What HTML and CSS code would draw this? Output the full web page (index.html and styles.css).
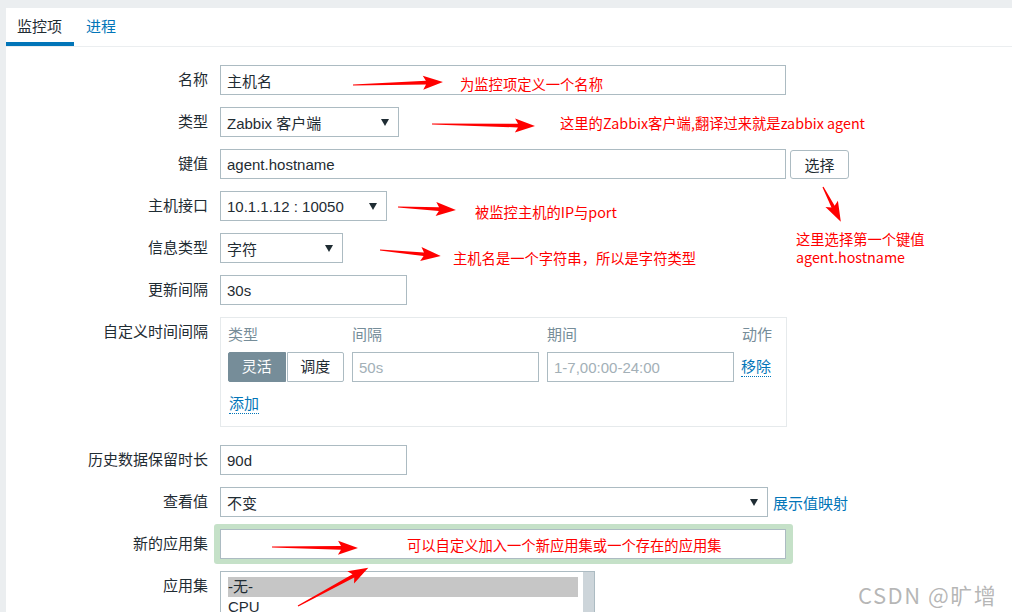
FILE: index.html
```html
<!DOCTYPE html>
<html lang="zh-CN">
<head>
<meta charset="UTF-8">
<title>监控项</title>
<link rel="stylesheet" href="styles.css">
</head>
<body>
<div class="panel">
    <div class="tabs">
        <span class="tab active">监控项</span>
        <span class="tab">进程</span>
    </div>
    <form class="form">
        <div class="row">
            <label>名称</label>
            <div class="field"><input class="text w-wide" type="text" value="主机名"></div>
        </div>
        <div class="row">
            <label>类型</label>
            <div class="field"><div class="select w-type"><span>Zabbix 客户端</span><i class="caret"></i></div></div>
        </div>
        <div class="row">
            <label>键值</label>
            <div class="field">
                <input class="text w-wide" type="text" value="agent.hostname">
                <button type="button" class="btn">选择</button>
            </div>
        </div>
        <div class="row">
            <label>主机接口</label>
            <div class="field"><div class="select w-iface"><span>10.1.1.12 : 10050</span><i class="caret"></i></div></div>
        </div>
        <div class="row">
            <label>信息类型</label>
            <div class="field"><div class="select w-info"><span>字符</span><i class="caret"></i></div></div>
        </div>
        <div class="row">
            <label>更新间隔</label>
            <div class="field"><input class="text w-short" type="text" value="30s"></div>
        </div>
        <div class="row row-custom">
            <label>自定义时间间隔</label>
            <div class="intervals">
                <div class="iv-grid">
                    <span class="iv-head">类型</span>
                    <span class="iv-head">间隔</span>
                    <span class="iv-head">期间</span>
                    <span class="iv-head">动作</span>
                    <div class="toggle">
                        <span class="seg on">灵活</span>
                        <span class="seg">调度</span>
                    </div>
                    <input class="text hint" type="text" placeholder="50s">
                    <input class="text hint" type="text" placeholder="1-7,00:00-24:00">
                    <a class="link dotted">移除</a>
                </div>
                <a class="link dotted add">添加</a>
            </div>
        </div>
        <div class="row">
            <label>历史数据保留时长</label>
            <div class="field"><input class="text w-short" type="text" value="90d"></div>
        </div>
        <div class="row row-tight">
            <label>查看值</label>
            <div class="field">
                <div class="select w-view"><span>不变</span><i class="caret"></i></div>
                <a class="link">展示值映射</a>
            </div>
        </div>
        <div class="row row-tight">
            <label class="tall">新的应用集</label>
            <div class="field"><div class="highlight"><input class="text w-wide" type="text"></div></div>
        </div>
        <div class="row">
            <label>应用集</label>
            <div class="field">
                <div class="listbox">
                    <div class="options">
                        <div class="opt picked">-无-</div>
                        <div class="opt">CPU</div>
                    </div>
                    <div class="scroll"></div>
                </div>
            </div>
        </div>
    </form>
</div>

<div class="overlay">
    <svg class="arrows" width="1012" height="612" viewBox="0 0 1012 612">
        <g fill="#f00">
            <path d="M0,-0.6 L73,-1.8 L70,-7 L90,0 L70,7 L73,1.8 L0,0.6Z" transform="translate(353 85) rotate(-1.9)"/>
            <path d="M0,-0.6 L86,-1.8 L83,-7 L103,0 L83,7 L86,1.8 L0,0.6Z" transform="translate(432 124) rotate(1.1)"/>
            <path d="M0,-0.6 L41,-1.8 L38,-7 L58,0 L38,7 L41,1.8 L0,0.6Z" transform="translate(398 207) rotate(3)"/>
            <path d="M0,-0.6 L44,-1.8 L41,-7 L61,0 L41,7 L44,1.8 L0,0.6Z" transform="translate(380 250) rotate(5.6)"/>
            <path d="M0,-0.6 L22,-1.8 L19,-7 L39,0 L19,7 L22,1.8 L0,0.6Z" transform="translate(823 187) rotate(62.8)"/>
            <path d="M0,-0.6 L69,-1.8 L66,-7 L86,0 L66,7 L69,1.8 L0,0.6Z" transform="translate(272 547) rotate(0.7)"/>
            <path d="M0,-0.6 L63,-1.8 L60,-7 L80,0 L60,7 L63,1.8 L0,0.6Z" transform="translate(298 606) rotate(-28.5)"/>
        </g>
    </svg>
    <div class="note n1">为监控项定义一个名称</div>
    <div class="note n2">这里的Zabbix客户端,翻译过来就是zabbix agent</div>
    <div class="note n3">被监控主机的IP与port</div>
    <div class="note n4">主机名是一个字符串，所以是字符类型</div>
    <div class="note n5">这里选择第一个键值<br>agent.hostname</div>
    <div class="note n6">可以自定义加入一个新应用集或一个存在的应用集</div>
</div>

<div class="watermark">CSDN @旷增</div>
</body>
</html>
```

FILE: styles.css
```css
body, html {
    margin: 0;
    height: 100%;
    overflow: hidden;
    font-family: "Liberation Sans", Arial, "Noto Sans CJK SC", sans-serif;
    font-size: 15px;
    color: #1f2c33;
    background-color: #ebeef0;
}
.panel {
    margin: 8px 0 0 6px;
    background: #fff;
    height: calc(100% - 8px);
    overflow: hidden;
}
.tabs {
    display: flex;
    border-bottom: 1px solid #ebeef0;
}
.tab {
    padding: 10px 12px 6px;
    line-height: 18px;
    color: #0275b8;
    border-bottom: 4px solid transparent;
}
.tab.active {
    padding: 10px 12px 6px 11px;
    color: #1f2c33;
    border-bottom-color: #0275b8;
}
.form {
    padding-top: 18px;
}
.row {
    display: grid;
    grid-template-columns: 202px 1fr;
    column-gap: 12px;
    margin-bottom: 12px;
}
.row.row-custom {
    margin-bottom: 18px;
}
.row.row-tight {
    margin-bottom: 7px;
}
.row label {
    text-align: right;
    line-height: 30px;
}
.row label.tall {
    line-height: 40px;
}
.field {
    display: flex;
    align-items: center;
    gap: 4px;
}
input.text {
    box-sizing: border-box;
    height: 30px;
    margin: 0;
    padding: 0 6px;
    border: 1px solid #acbbc2;
    border-radius: 0;
    font: inherit;
    color: #1f2c33;
    background: #fff;
    outline: none;
}
input.hint::placeholder {
    color: #a3b0b7;
}
.w-wide { width: 566px; }
.w-type { width: 179px; }
.w-iface { width: 167px; }
.w-info { width: 123px; }
.w-short { width: 187px; }
.w-view { width: 548px; }
.select {
    box-sizing: border-box;
    height: 30px;
    padding: 0 9px 0 6px;
    border: 1px solid #acbbc2;
    display: flex;
    align-items: center;
    justify-content: space-between;
}
.caret {
    width: 0;
    height: 0;
    border-left: 4px solid transparent;
    border-right: 4px solid transparent;
    border-top: 7px solid #1f2c33;
}
.btn {
    box-sizing: border-box;
    width: 59px;
    height: 29px;
    margin: 0;
    border: 1px solid #acbbc2;
    border-radius: 3px;
    background: #fff;
    font: inherit;
    color: #1f2c33;
    padding: 0;
}
.link {
    color: #0275b8;
    margin-left: 1px;
}
.link.dotted {
    align-self: center;
    border-bottom: 1px dotted #0275b8;
    line-height: 18px;
}
.intervals {
    box-sizing: border-box;
    width: 567px;
    height: 110px;
    border: 1px solid #e6eaec;
    padding: 8px 0 0 7px;
}
.iv-grid {
    display: grid;
    grid-template-columns: 116px 187px 187px auto;
    column-gap: 8px;
    row-gap: 8px;
}
.iv-head {
    color: #768d99;
    line-height: 18px;
}
.iv-grid input.text {
    width: 187px;
}
.iv-grid .link.dotted {
    justify-self: start;
    margin-left: -1px;
}
.toggle {
    display: flex;
    height: 30px;
}
.seg {
    box-sizing: border-box;
    width: 58px;
    height: 30px;
    line-height: 28px;
    text-align: center;
    border: 1px solid #acbbc2;
    border-radius: 0 2px 2px 0;
    margin-left: 1px;
}
.seg.on {
    width: 58px;
    margin-left: 0;
    background: #768d99;
    border-color: #768d99;
    border-radius: 2px 0 0 2px;
    color: #fff;
}
.add {
    display: inline-block;
    margin-top: 13px;
}
.highlight {
    margin-left: -6px;
    padding: 5px 7px 5px 6px;
    background: #c5e1c8;
    border-radius: 3px;
    display: flex;
}
.listbox {
    box-sizing: border-box;
    width: 375px;
    height: 60px;
    border: 1px solid #acbbc2;
    display: flex;
}
.options {
    flex: 1;
    padding: 5px 5px 0 7px;
}
.opt {
    line-height: 20px;
}
.opt.picked {
    background: #c6c6c6;
}
.scroll {
    width: 11px;
    background: #cdd5da;
}
.overlay {
    position: absolute;
    left: 0;
    top: 0;
    width: 1012px;
    height: 612px;
    pointer-events: none;
}
.arrows {
    position: absolute;
    left: 0;
    top: 0;
}
.note {
    position: absolute;
    color: #f00;
    font-family: "Noto Sans CJK SC", sans-serif;
    font-size: 14.3px;
    line-height: 18px;
    white-space: nowrap;
}
.n1 { left: 460px; top: 75px; }
.n2 { left: 560px; top: 114px; }
.n3 { left: 475px; top: 203px; }
.n4 { left: 453px; top: 249px; }
.n5 { left: 796px; top: 230px; }
.n6 { left: 407px; top: 536px; }
.watermark {
    position: absolute;
    left: 858px;
    top: 580px;
    font-family: "Noto Sans CJK SC", sans-serif;
    font-size: 22px;
    line-height: 28px;
    letter-spacing: 1.5px;
    color: rgba(110, 110, 110, 0.5);
    white-space: nowrap;
}
```
